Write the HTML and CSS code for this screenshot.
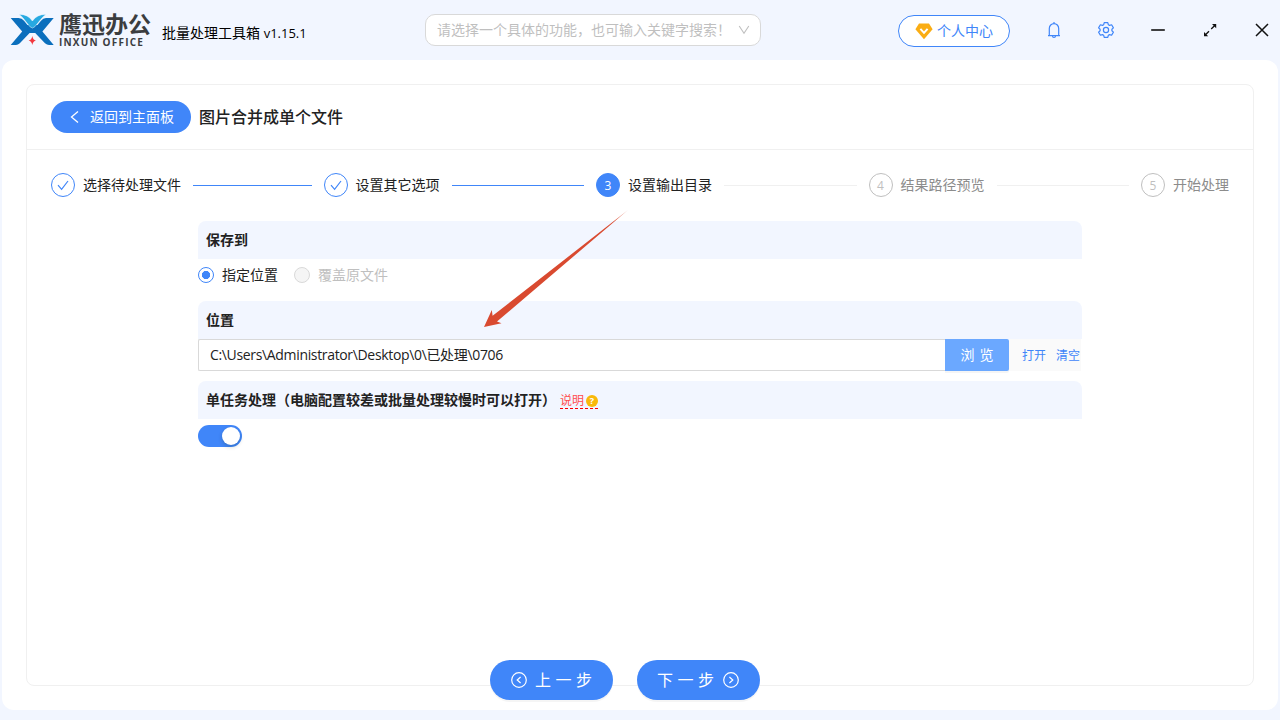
FILE: index.html
```html
<!DOCTYPE html>
<html lang="zh-CN">
<head>
  <meta charset="UTF-8" />
  <meta name="viewport" content="width=device-width, initial-scale=1" />
  <title>鹰迅办公 - 批量处理工具箱</title>
  <link rel="stylesheet" href="styles.css">
</head>
<body>
  <header class="topbar">
    <div class="brand">
      <svg class="brand-mark" width="44" height="34" viewBox="10 13 44 34">
        <path fill="#0b6fbd" d="M10.7 18H18.5Q22 18 24 20.8L32 30.5 19.8 43.2Q18 45 16 45H10.7L22.2 31.5Z"/>
        <path fill="#0b6fbd" d="M53.7 18H46Q43 18 41 20.8L32.8 30.5 45 43.2Q47 45 49 45H53.7L42.4 31.5Z"/>
        <path fill="#0b6fbd" d="M26 25H39L36 33H29Z"/>
        <path fill="#27a9e1" stroke="#f2f6ff" stroke-width=".5" d="M19 14.5Q28 14 32.4 21 37 14 46 14.5 43.5 16 42 18L35 26.6Q32.4 29.5 29.8 26.6L23 18Q21.5 16 19 14.5Z"/>
        <path fill="#f2383f" d="M32.3 36Q33 40 36 40.5 33 41 32.3 45 31.6 41 28.6 40.5 31.6 40 32.3 36Z"/>
      </svg>
      <div class="brand-name">
        <span class="brand-cn">鹰迅办公</span>
        <span class="brand-en">INXUN OFFICE</span>
      </div>
    </div>
    <div class="app-title">批量处理工具箱 <span class="version">v1.15.1</span></div>
    <div class="search">
      <span>请选择一个具体的功能，也可输入关键字搜索！</span>
      <svg width="12" height="12" viewBox="0 0 12 12" fill="none" stroke="#bfbfbf" stroke-width="1.1"><path d="M1.2 2L6 9.2 10.8 2"/></svg>
    </div>
    <button class="user-btn">
      <svg width="18" height="17" viewBox="0 0 18 17">
        <path fill="#faad14" d="M4 .5H14L17.6 6.2 9 16.3.4 6.2Z"/>
        <path fill="none" stroke="#fff" stroke-width="2" d="M5.4 5.8L9 9.8 12.6 5.8"/>
      </svg>
      <span>个人中心</span>
    </button>
    <div class="tools">
      <svg width="18" height="18" viewBox="0 0 18 18" fill="none" stroke="#4086f9" stroke-width="1.2">
        <path d="M4.3 14.4V7.5A4.7 4.9 0 0 1 13.7 7.5V14.4M3 14.6H15M7.5 15A1.5 1.5 0 0 0 10.5 15M9 1V2.6"/>
      </svg>
      <svg width="18" height="18" viewBox="0 0 18 18" fill="none" stroke="#4086f9" stroke-width="1.2" stroke-linejoin="round">
        <path d="M7.2 1.6H10.8L11.3 3.7 12.6 4.4 14.6 3.8 16.4 6.9 14.9 8.3V9.7L16.4 11.1 14.6 14.2 12.6 13.6 11.3 14.3 10.8 16.4H7.2L6.7 14.3 5.4 13.6 3.4 14.2 1.6 11.1 3.1 9.7V8.3L1.6 6.9 3.4 3.8 5.4 4.4 6.7 3.7Z"/>
        <circle cx="9" cy="9" r="2.6"/>
      </svg>
      <svg width="18" height="18" viewBox="0 0 18 18" stroke="#111" stroke-width="1.6"><path d="M2.2 9H15.8"/></svg>
      <svg width="18" height="18" viewBox="0 0 18 18" fill="#111" stroke="#111">
        <path stroke="none" d="M15.2 3V7.2L11 3ZM3 15.2V11L7.2 15.2Z"/>
        <path stroke-width="1.3" d="M14 4.2L10.2 8M4.2 14L8 10.2"/>
      </svg>
      <svg width="18" height="18" viewBox="0 0 18 18" stroke="#111" stroke-width="1.5"><path d="M3 3L15 15M15 3L3 15"/></svg>
    </div>
  </header>

  <main class="page">
    <section class="card">
      <div class="card-head">
        <button class="btn-back">
          <svg width="14" height="14" viewBox="0 0 14 14" fill="none" stroke="#fff" stroke-width="1.3"><path d="M10 1.5L3.5 7 10 12.5"/></svg>
          <span>返回到主面板</span>
        </button>
        <h1>图片合并成单个文件</h1>
      </div>

      <div class="steps">
        <div class="step done">
          <span class="step-icon"><svg width="14" height="14" viewBox="0 0 14 14"><path d="M2 7.2L5.6 11.3 12 3"/></svg></span>
          <span class="step-title">选择待处理文件</span>
        </div>
        <div class="step done">
          <span class="step-icon"><svg width="14" height="14" viewBox="0 0 14 14"><path d="M2 7.2L5.6 11.3 12 3"/></svg></span>
          <span class="step-title">设置其它选项</span>
        </div>
        <div class="step active">
          <span class="step-icon">3</span>
          <span class="step-title">设置输出目录</span>
        </div>
        <div class="step">
          <span class="step-icon">4</span>
          <span class="step-title">结果路径预览</span>
        </div>
        <div class="step">
          <span class="step-icon">5</span>
          <span class="step-title">开始处理</span>
        </div>
      </div>

      <div class="form">
        <div class="form-label">保存到</div>
        <div class="radios">
          <label class="radio checked"><i></i>指定位置</label>
          <label class="radio disabled"><i></i>覆盖原文件</label>
        </div>

        <div class="form-label">位置</div>
        <div class="path-row">
          <div class="path-input">C:\Users\Administrator\Desktop\0\已处理\0706</div>
          <button class="btn-browse">浏览</button>
          <div class="links"><a>打开</a><a>清空</a></div>
        </div>

        <div class="form-label">
          <span>单任务处理（电脑配置较差或批量处理较慢时可以打开）</span>
          <span class="hint">说明<i>?</i></span>
        </div>
        <div class="switch"><i></i></div>
      </div>
    </section>

    <svg class="arrow" width="150" height="122" viewBox="480 208 150 122">
      <path fill="url(#fade)" d="M628 210L497 321.6 501.5 323.2 484 327 491.8 310 492.6 315.8Z"/>
      <defs>
        <linearGradient id="fade" gradientUnits="userSpaceOnUse" x1="628" y1="210" x2="484" y2="327">
          <stop offset="0" stop-color="#d94a30" stop-opacity=".5"/>
          <stop offset=".1" stop-color="#d94a30"/>
        </linearGradient>
      </defs>
    </svg>

    <div class="actions">
      <button class="btn-step">
        <svg width="16" height="16" viewBox="0 0 16 16" fill="none" stroke="#fff" stroke-width="1.2"><circle cx="8" cy="8" r="7.3"/><path d="M9.6 5L6.2 8 9.6 11"/></svg>
        <span>上一步</span>
      </button>
      <button class="btn-step next">
        <span>下一步</span>
        <svg width="16" height="16" viewBox="0 0 16 16" fill="none" stroke="#fff" stroke-width="1.2"><circle cx="8" cy="8" r="7.3"/><path d="M6.4 5L9.8 8 6.4 11"/></svg>
      </button>
    </div>
  </main>
</body>
</html>
```
FILE: styles.css
```css
* {
  box-sizing: border-box;
}

body {
  margin: 0;
  height: 720px;
  background: #f2f6ff;
  color: #222;
  font-family: "Open Sans", "Noto Sans CJK SC", sans-serif;
  font-size: 14px;
  line-height: 22px;
  overflow: hidden;
  display: flex;
  flex-direction: column;
}

button {
  border: 0;
  padding: 0;
  font: inherit;
  color: #fff;
  background: #4086f9;
  cursor: pointer;
  display: flex;
  align-items: center;
}

svg {
  flex: none;
}

/* top bar */
.topbar {
  height: 60px;
  flex: none;
  display: flex;
  align-items: center;
  padding-left: 10px;
  white-space: nowrap;
}

.brand {
  display: flex;
  width: 152px;
  gap: 5px;
}

.brand-name {
  display: flex;
  flex-direction: column;
  color: #3b3d3f;
}

.brand-cn {
  font-size: 23px;
  line-height: 23px;
  font-weight: 700;
}

.brand-en {
  margin-top: 1px;
  font-size: 10px;
  line-height: 11px;
  font-weight: 700;
  letter-spacing: 1.2px;
}

.app-title {
  width: 263px;
  padding-top: 5px;
  color: #000;
}

.version {
  font-size: 13px;
}

.search {
  width: 336px;
  height: 32px;
  padding: 0 10px 0 11px;
  display: flex;
  align-items: center;
  justify-content: space-between;
  background: #fff;
  border: 1px solid #d9d9d9;
  border-radius: 10px;
  color: #bfbfbf;
}

.search span {
  width: 298px;
  overflow: hidden;
}

.user-btn {
  width: 112px;
  height: 32px;
  margin: 2px 0 0 137px;
  padding-left: 16px;
  gap: 4px;
  background: #fff;
  border: 1px solid #4086f9;
  border-radius: 16px;
  color: #4086f9;
}

.tools {
  display: flex;
  gap: 34px;
  margin-left: 35px;
}

/* page */
.page {
  position: relative;
  height: 650px;
  margin: 0 2px;
  padding: 24px;
  background: #fff;
  border-radius: 12px;
}

.card {
  height: 602px;
  border: 1px solid #f0f0f0;
  border-radius: 8px;
}

.card-head {
  height: 65px;
  padding: 0 24px;
  display: flex;
  align-items: center;
  gap: 8px;
  border-bottom: 1px solid #f0f0f0;
}

.card-head h1 {
  margin: 0;
  font-size: 16px;
  font-weight: 500;
}

.btn-back {
  width: 140px;
  height: 32px;
  padding-left: 17px;
  gap: 8px;
  border-radius: 16px;
}

.steps {
  display: flex;
  padding: 23px 24px 24px;
}

.step {
  flex: 1 0 0;
  display: flex;
  align-items: center;
  gap: 8px;
  white-space: nowrap;
  color: #8c8c8c;
}

.step:last-child {
  flex: none;
}

.step:not(:last-child)::after {
  content: '';
  flex: 1;
  height: 1px;
  margin: 0 12px 0 4px;
  background: #f0f0f0;
}

.step-icon {
  width: 24px;
  height: 24px;
  display: flex;
  align-items: center;
  justify-content: center;
  border: 1px solid #bfbfbf;
  border-radius: 50%;
  color: #bfbfbf;
  font-size: 12px;
  padding-top: 2px;
}

.step-icon path {
  fill: none;
  stroke: #4086f9;
  stroke-width: 1.2;
}

.step.done,
.step.active {
  color: #222;
}

.step.done .step-icon {
  padding-top: 0;
  border-color: #4086f9;
}

.step.done::after {
  background: #4086f9;
}

.step.active .step-icon {
  background: #4086f9;
  border-color: #4086f9;
  color: #fff;
}

/* form */
.form {
  width: 884px;
  margin: 0 auto;
}

.form-label {
  height: 38px;
  padding: 0 8px;
  display: flex;
  align-items: center;
  background: #f2f6ff;
  border-radius: 8px 8px 0 0;
  font-weight: 700;
}

.radios {
  height: 42px;
  padding-top: 5px;
  display: flex;
  gap: 16px;
}

.radio {
  height: 22px;
  display: flex;
  align-items: center;
  gap: 8px;
}

.radio i {
  width: 16px;
  height: 16px;
  border: 1px solid #d9d9d9;
  border-radius: 50%;
  background: #f5f5f5;
}

.radio.checked i {
  border: 1px solid #4086f9;
  background: radial-gradient(circle, #4086f9 3.8px, #fff 4.4px);
}

.radio.disabled {
  color: #bfbfbf;
}

.path-row {
  height: 32px;
  display: flex;
  margin-bottom: 10px;
}

.path-input {
  width: 747px;
  padding: 4px 11px;
  border: 1px solid #d9d9d9;
  border-right: 0;
  border-radius: 2px 0 0 2px;
  letter-spacing: -0.34px;
}

.btn-browse {
  width: 64px;
  justify-content: center;
  background: #6ba8ff;
  border-radius: 0 2px 2px 0;
  letter-spacing: 5px;
  padding-left: 5px;
  box-shadow: 0 2px 0 rgba(0, 0, 0, 0.04);
}

.links {
  width: 72px;
  display: flex;
  align-items: center;
  gap: 10px;
  padding: 2px 0 0 13px;
  background: #fafafa;
  font-size: 12px;
  color: #4086f9;
  white-space: nowrap;
}

.hint {
  height: 18px;
  margin-left: 4px;
  padding-top: 2px;
  display: flex;
  align-items: center;
  gap: 2px;
  border-bottom: 1px dashed #f00;
  color: #ff4d4f;
  font-size: 12px;
  font-weight: 400;
}

.hint i {
  width: 12px;
  height: 12px;
  border-radius: 50%;
  background: #f9b90a;
  color: #fff;
  font-size: 9px;
  line-height: 12px;
  font-style: normal;
  font-weight: 700;
  text-align: center;
}

.switch {
  width: 44px;
  height: 22px;
  margin-top: 6px;
  padding: 2px;
  display: flex;
  justify-content: flex-end;
  background: #4086f9;
  border-radius: 11px;
}

.switch i {
  width: 18px;
  height: 18px;
  border-radius: 50%;
  background: #fff;
  box-shadow: 0 2px 4px rgba(0, 35, 11, 0.2);
}

/* red pointer drawn over the form */
.arrow {
  position: absolute;
  left: 478px;
  top: 148px;
}

/* buttons sit on the bottom border of the card */
.actions {
  position: absolute;
  left: 488px;
  top: 600px;
  display: flex;
  gap: 24px;
}

.btn-step {
  width: 123px;
  height: 40px;
  padding-left: 21px;
  gap: 8px;
  border-radius: 20px;
  font-size: 16px;
  letter-spacing: 4.5px;
  box-shadow: 0 2px 0 rgba(0, 0, 0, 0.04);
}

.btn-step.next {
  padding-left: 20px;
  gap: 4px;
}
```
